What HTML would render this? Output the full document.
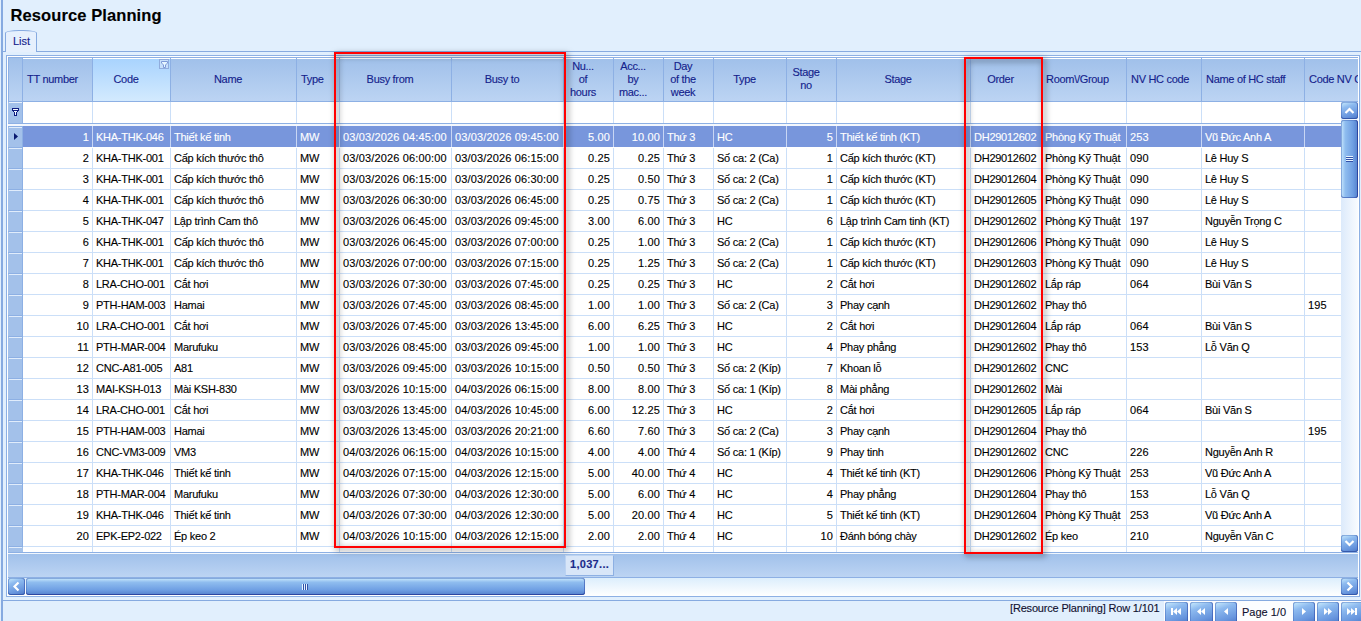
<!DOCTYPE html><html><head><meta charset="utf-8"><style>
*{margin:0;padding:0;box-sizing:border-box}
html,body{width:1361px;height:621px;overflow:hidden}
body{position:relative;background:#E1EFFD;font-family:"Liberation Sans",sans-serif;font-size:11px;color:#000;-webkit-text-stroke:0.12px currentColor}
div,span{position:absolute}
.t{white-space:nowrap;line-height:13px}
.hd{color:#14228C;text-align:center;line-height:13px;white-space:nowrap;letter-spacing:-0.3px}
.cl{letter-spacing:-0.25px}
.nm{letter-spacing:0.15px}

</style></head><body>
<div style="left:1px;top:0px;width:2px;height:621px;background:#86AAE0"></div>
<div class="t" style="left:10.5px;top:5px;font-size:16.5px;font-weight:bold;line-height:20px;color:#000;letter-spacing:0.1px">Resource Planning</div>
<div style="left:1px;top:51px;width:1360px;height:1px;background:#86AAE0"></div>
<div style="left:5px;top:30px;width:32px;height:22px;border:1px solid #86AAE0;border-bottom:none;border-radius:14px 14px 0 0/3px 3px 0 0;background:#E6F0FD"></div>
<div class="t" style="left:13px;top:35px;color:#14228C">List</div>
<div style="left:1px;top:600px;width:1360px;height:1px;background:#86AAE0"></div>
<div style="left:6px;top:55px;width:1354px;height:542px;border:1px solid #8DB0E4;background:#fff"></div>
<div style="left:8px;top:57px;width:1350px;height:45px;border-top:1px solid #8DB0E4;border-bottom:1px solid #8DB0E4;background:linear-gradient(#A0C0EA,#BCD4F3)"></div>
<div style="left:8px;top:58px;width:1350px;height:1px;background:#fff"></div>
<div style="left:8px;top:57px;width:15px;height:45px;border:1px solid #8DB0E4;border-right:1px solid #8DB0E4;background:linear-gradient(#A0C0EA,#BCD4F3)"></div>
<div style="left:92px;top:57px;width:1px;height:45px;background:#8DB0E4"></div>
<div class="hd" style="left:27px;top:73px;text-align:left">TT number</div>
<div style="left:93px;top:58px;width:77px;height:43px;background:linear-gradient(#A8D3FE,#D3EAFE)"></div>
<div style="left:93px;top:58px;width:77px;height:1px;background:#fff"></div>
<div style="left:170px;top:57px;width:1px;height:45px;background:#8DB0E4"></div>
<div class="hd" style="left:93px;top:73px;width:66px">Code</div>
<div style="left:296px;top:57px;width:1px;height:45px;background:#8DB0E4"></div>
<div class="hd" style="left:171px;top:73px;width:114px">Name</div>
<div style="left:339px;top:57px;width:1px;height:45px;background:#8DB0E4"></div>
<div class="hd" style="left:301px;top:73px;text-align:left">Type</div>
<div style="left:451px;top:57px;width:1px;height:45px;background:#8DB0E4"></div>
<div class="hd" style="left:340px;top:73px;width:100px">Busy from</div>
<div style="left:563px;top:57px;width:1px;height:45px;background:#8DB0E4"></div>
<div class="hd" style="left:452px;top:73px;width:100px">Busy to</div>
<div style="left:613px;top:57px;width:1px;height:45px;background:#8DB0E4"></div>
<div class="hd" style="left:564px;top:60px;width:38px">Nu...<br>of<br>hours</div>
<div style="left:663px;top:57px;width:1px;height:45px;background:#8DB0E4"></div>
<div class="hd" style="left:614px;top:60px;width:38px">Acc...<br>by<br>mac...</div>
<div style="left:713px;top:57px;width:1px;height:45px;background:#8DB0E4"></div>
<div class="hd" style="left:664px;top:60px;width:38px">Day<br>of the<br>week</div>
<div style="left:786px;top:57px;width:1px;height:45px;background:#8DB0E4"></div>
<div class="hd" style="left:714px;top:73px;width:61px">Type</div>
<div style="left:836px;top:57px;width:1px;height:45px;background:#8DB0E4"></div>
<div class="hd" style="left:787px;top:66px;width:38px">Stage<br>no</div>
<div style="left:970px;top:57px;width:1px;height:45px;background:#8DB0E4"></div>
<div class="hd" style="left:837px;top:73px;width:122px">Stage</div>
<div style="left:1041px;top:57px;width:1px;height:45px;background:#8DB0E4"></div>
<div class="hd" style="left:971px;top:73px;width:59px">Order</div>
<div style="left:1126px;top:57px;width:1px;height:45px;background:#8DB0E4"></div>
<div class="hd" style="left:1046px;top:73px;text-align:left">Room\/Group</div>
<div style="left:1201px;top:57px;width:1px;height:45px;background:#8DB0E4"></div>
<div class="hd" style="left:1131px;top:73px;text-align:left">NV HC code</div>
<div style="left:1304px;top:57px;width:1px;height:45px;background:#8DB0E4"></div>
<div class="hd" style="left:1206px;top:73px;text-align:left">Name of HC staff</div>
<div class="hd" style="left:1309px;top:73px;text-align:left">Code NV C</div>
<div style="left:159px;top:59px;width:10px;height:10px;border:1px solid #90ACDD;background:#C6DFFA"></div>
<svg style="position:absolute;left:161px;top:61px" width="7" height="7"><path d="M0.5 0.5h6v1.5l-2 2v2.5h-2v-2.5l-2-2z" fill="#E6F6FF" stroke="#7E9AD8" stroke-width="1"/></svg>
<div style="left:8px;top:102px;width:15px;height:22px;background:#A3C1EA"></div>
<div style="left:9px;top:102px;width:13px;height:1px;background:#E8F1FC"></div>
<div style="left:8px;top:123px;width:1333px;height:1px;background:#8DB0E4"></div>
<div style="left:8px;top:124px;width:1333px;height:2px;background:#F3F7FD"></div>
<div style="left:8px;top:126px;width:15px;height:1px;background:#8DB0E4"></div>
<div style="left:92px;top:102px;width:1px;height:21px;background:#CBDFF8"></div>
<div style="left:170px;top:102px;width:1px;height:21px;background:#CBDFF8"></div>
<div style="left:296px;top:102px;width:1px;height:21px;background:#CBDFF8"></div>
<div style="left:339px;top:102px;width:1px;height:21px;background:#CBDFF8"></div>
<div style="left:451px;top:102px;width:1px;height:21px;background:#CBDFF8"></div>
<div style="left:563px;top:102px;width:1px;height:21px;background:#CBDFF8"></div>
<div style="left:613px;top:102px;width:1px;height:21px;background:#CBDFF8"></div>
<div style="left:663px;top:102px;width:1px;height:21px;background:#CBDFF8"></div>
<div style="left:713px;top:102px;width:1px;height:21px;background:#CBDFF8"></div>
<div style="left:786px;top:102px;width:1px;height:21px;background:#CBDFF8"></div>
<div style="left:836px;top:102px;width:1px;height:21px;background:#CBDFF8"></div>
<div style="left:970px;top:102px;width:1px;height:21px;background:#CBDFF8"></div>
<div style="left:1041px;top:102px;width:1px;height:21px;background:#CBDFF8"></div>
<div style="left:1126px;top:102px;width:1px;height:21px;background:#CBDFF8"></div>
<div style="left:1201px;top:102px;width:1px;height:21px;background:#CBDFF8"></div>
<div style="left:1304px;top:102px;width:1px;height:21px;background:#CBDFF8"></div>
<div style="left:22px;top:102px;width:1px;height:22px;background:#8DB0E4"></div>
<svg style="position:absolute;left:12px;top:108px" width="7" height="8" shape-rendering="crispEdges"><rect x="0" y="0" width="1" height="1" fill="#0D1B80"/><rect x="1" y="0" width="1" height="1" fill="#0D1B80"/><rect x="2" y="0" width="1" height="1" fill="#0D1B80"/><rect x="3" y="0" width="1" height="1" fill="#0D1B80"/><rect x="4" y="0" width="1" height="1" fill="#0D1B80"/><rect x="5" y="0" width="1" height="1" fill="#0D1B80"/><rect x="6" y="0" width="1" height="1" fill="#0D1B80"/><rect x="0" y="1" width="1" height="1" fill="#0D1B80"/><rect x="1" y="1" width="1" height="1" fill="#F4F9FF"/><rect x="2" y="1" width="1" height="1" fill="#F4F9FF"/><rect x="3" y="1" width="1" height="1" fill="#F4F9FF"/><rect x="4" y="1" width="1" height="1" fill="#F4F9FF"/><rect x="5" y="1" width="1" height="1" fill="#F4F9FF"/><rect x="6" y="1" width="1" height="1" fill="#0D1B80"/><rect x="0" y="2" width="1" height="1" fill="#0D1B80"/><rect x="1" y="2" width="1" height="1" fill="#0D1B80"/><rect x="2" y="2" width="1" height="1" fill="#0D1B80"/><rect x="3" y="2" width="1" height="1" fill="#0D1B80"/><rect x="4" y="2" width="1" height="1" fill="#0D1B80"/><rect x="5" y="2" width="1" height="1" fill="#0D1B80"/><rect x="6" y="2" width="1" height="1" fill="#0D1B80"/><rect x="1" y="3" width="1" height="1" fill="#0D1B80"/><rect x="2" y="3" width="1" height="1" fill="#F4F9FF"/><rect x="3" y="3" width="1" height="1" fill="#F4F9FF"/><rect x="4" y="3" width="1" height="1" fill="#F4F9FF"/><rect x="5" y="3" width="1" height="1" fill="#0D1B80"/><rect x="2" y="4" width="1" height="1" fill="#0D1B80"/><rect x="3" y="4" width="1" height="1" fill="#F4F9FF"/><rect x="4" y="4" width="1" height="1" fill="#0D1B80"/><rect x="2" y="5" width="1" height="1" fill="#0D1B80"/><rect x="3" y="5" width="1" height="1" fill="#F4F9FF"/><rect x="4" y="5" width="1" height="1" fill="#0D1B80"/><rect x="2" y="6" width="1" height="1" fill="#0D1B80"/><rect x="3" y="6" width="1" height="1" fill="#F4F9FF"/><rect x="4" y="6" width="1" height="1" fill="#0D1B80"/><rect x="2" y="7" width="1" height="1" fill="#0D1B80"/><rect x="3" y="7" width="1" height="1" fill="#0D1B80"/><rect x="4" y="7" width="1" height="1" fill="#0D1B80"/></svg>
<div style="left:8px;top:127px;width:15px;height:20px;background:#A3C1EA"></div>
<div style="left:9px;top:127px;width:13px;height:1px;background:#E0ECFB"></div>
<div style="left:8px;top:147px;width:15px;height:1px;background:#8DB0E4"></div>
<div style="left:23px;top:126px;width:1318px;height:21px;background:#7896DC"></div>
<div style="left:92px;top:126px;width:1px;height:21px;background:#C8D6F4"></div>
<div class="t nm" style="right:1272px;top:131px;color:#fff">1</div>
<div style="left:170px;top:126px;width:1px;height:21px;background:#C8D6F4"></div>
<div class="t cl" style="left:96px;top:131px;color:#fff">KHA-THK-046</div>
<div style="left:296px;top:126px;width:1px;height:21px;background:#C8D6F4"></div>
<div class="t cl" style="left:174px;top:131px;color:#fff">Thiết kế tinh</div>
<div style="left:339px;top:126px;width:1px;height:21px;background:#C8D6F4"></div>
<div class="t cl" style="left:300px;top:131px;color:#fff">MW</div>
<div style="left:451px;top:126px;width:1px;height:21px;background:#C8D6F4"></div>
<div class="t nm" style="left:343px;top:131px;color:#fff">03/03/2026 04:45:00</div>
<div style="left:563px;top:126px;width:1px;height:21px;background:#C8D6F4"></div>
<div class="t nm" style="left:455px;top:131px;color:#fff">03/03/2026 09:45:00</div>
<div style="left:613px;top:126px;width:1px;height:21px;background:#C8D6F4"></div>
<div class="t nm" style="right:751px;top:131px;color:#fff">5.00</div>
<div style="left:663px;top:126px;width:1px;height:21px;background:#C8D6F4"></div>
<div class="t nm" style="right:701px;top:131px;color:#fff">10.00</div>
<div style="left:713px;top:126px;width:1px;height:21px;background:#C8D6F4"></div>
<div class="t cl" style="left:667px;top:131px;color:#fff">Thứ 3</div>
<div style="left:786px;top:126px;width:1px;height:21px;background:#C8D6F4"></div>
<div class="t cl" style="left:717px;top:131px;color:#fff">HC</div>
<div style="left:836px;top:126px;width:1px;height:21px;background:#C8D6F4"></div>
<div class="t nm" style="right:528px;top:131px;color:#fff">5</div>
<div style="left:970px;top:126px;width:1px;height:21px;background:#C8D6F4"></div>
<div class="t cl" style="left:840px;top:131px;color:#fff">Thiết kế tinh (KT)</div>
<div style="left:1041px;top:126px;width:1px;height:21px;background:#C8D6F4"></div>
<div class="t cl" style="left:974px;top:131px;color:#fff">DH29012602</div>
<div style="left:1126px;top:126px;width:1px;height:21px;background:#C8D6F4"></div>
<div class="t cl" style="left:1045px;top:131px;color:#fff">Phòng Kỹ Thuật</div>
<div style="left:1201px;top:126px;width:1px;height:21px;background:#C8D6F4"></div>
<div class="t nm" style="left:1130px;top:131px;color:#fff">253</div>
<div style="left:1304px;top:126px;width:1px;height:21px;background:#C8D6F4"></div>
<div class="t cl" style="left:1205px;top:131px;color:#fff">Vũ Đức Anh A</div>
<div style="left:8px;top:148px;width:15px;height:20px;background:#A3C1EA"></div>
<div style="left:9px;top:148px;width:13px;height:1px;background:#E0ECFB"></div>
<div style="left:8px;top:168px;width:15px;height:1px;background:#8DB0E4"></div>
<div style="left:23px;top:168px;width:1318px;height:1px;background:#CBDFF8"></div>
<div style="left:92px;top:148px;width:1px;height:21px;background:#CBDFF8"></div>
<div class="t nm" style="right:1272px;top:152px;color:#000">2</div>
<div style="left:170px;top:148px;width:1px;height:21px;background:#CBDFF8"></div>
<div class="t cl" style="left:96px;top:152px;color:#000">KHA-THK-001</div>
<div style="left:296px;top:148px;width:1px;height:21px;background:#CBDFF8"></div>
<div class="t cl" style="left:174px;top:152px;color:#000">Cấp kích thước thô</div>
<div style="left:339px;top:148px;width:1px;height:21px;background:#CBDFF8"></div>
<div class="t cl" style="left:300px;top:152px;color:#000">MW</div>
<div style="left:451px;top:148px;width:1px;height:21px;background:#CBDFF8"></div>
<div class="t nm" style="left:343px;top:152px;color:#000">03/03/2026 06:00:00</div>
<div style="left:563px;top:148px;width:1px;height:21px;background:#CBDFF8"></div>
<div class="t nm" style="left:455px;top:152px;color:#000">03/03/2026 06:15:00</div>
<div style="left:613px;top:148px;width:1px;height:21px;background:#CBDFF8"></div>
<div class="t nm" style="right:751px;top:152px;color:#000">0.25</div>
<div style="left:663px;top:148px;width:1px;height:21px;background:#CBDFF8"></div>
<div class="t nm" style="right:701px;top:152px;color:#000">0.25</div>
<div style="left:713px;top:148px;width:1px;height:21px;background:#CBDFF8"></div>
<div class="t cl" style="left:667px;top:152px;color:#000">Thứ 3</div>
<div style="left:786px;top:148px;width:1px;height:21px;background:#CBDFF8"></div>
<div class="t cl" style="left:717px;top:152px;color:#000">Số ca: 2 (Ca)</div>
<div style="left:836px;top:148px;width:1px;height:21px;background:#CBDFF8"></div>
<div class="t nm" style="right:528px;top:152px;color:#000">1</div>
<div style="left:970px;top:148px;width:1px;height:21px;background:#CBDFF8"></div>
<div class="t cl" style="left:840px;top:152px;color:#000">Cấp kích thước (KT)</div>
<div style="left:1041px;top:148px;width:1px;height:21px;background:#CBDFF8"></div>
<div class="t cl" style="left:974px;top:152px;color:#000">DH29012602</div>
<div style="left:1126px;top:148px;width:1px;height:21px;background:#CBDFF8"></div>
<div class="t cl" style="left:1045px;top:152px;color:#000">Phòng Kỹ Thuật</div>
<div style="left:1201px;top:148px;width:1px;height:21px;background:#CBDFF8"></div>
<div class="t nm" style="left:1130px;top:152px;color:#000">090</div>
<div style="left:1304px;top:148px;width:1px;height:21px;background:#CBDFF8"></div>
<div class="t cl" style="left:1205px;top:152px;color:#000">Lê Huy S</div>
<div style="left:8px;top:169px;width:15px;height:20px;background:#A3C1EA"></div>
<div style="left:9px;top:169px;width:13px;height:1px;background:#E0ECFB"></div>
<div style="left:8px;top:189px;width:15px;height:1px;background:#8DB0E4"></div>
<div style="left:23px;top:189px;width:1318px;height:1px;background:#CBDFF8"></div>
<div style="left:92px;top:169px;width:1px;height:21px;background:#CBDFF8"></div>
<div class="t nm" style="right:1272px;top:173px;color:#000">3</div>
<div style="left:170px;top:169px;width:1px;height:21px;background:#CBDFF8"></div>
<div class="t cl" style="left:96px;top:173px;color:#000">KHA-THK-001</div>
<div style="left:296px;top:169px;width:1px;height:21px;background:#CBDFF8"></div>
<div class="t cl" style="left:174px;top:173px;color:#000">Cấp kích thước thô</div>
<div style="left:339px;top:169px;width:1px;height:21px;background:#CBDFF8"></div>
<div class="t cl" style="left:300px;top:173px;color:#000">MW</div>
<div style="left:451px;top:169px;width:1px;height:21px;background:#CBDFF8"></div>
<div class="t nm" style="left:343px;top:173px;color:#000">03/03/2026 06:15:00</div>
<div style="left:563px;top:169px;width:1px;height:21px;background:#CBDFF8"></div>
<div class="t nm" style="left:455px;top:173px;color:#000">03/03/2026 06:30:00</div>
<div style="left:613px;top:169px;width:1px;height:21px;background:#CBDFF8"></div>
<div class="t nm" style="right:751px;top:173px;color:#000">0.25</div>
<div style="left:663px;top:169px;width:1px;height:21px;background:#CBDFF8"></div>
<div class="t nm" style="right:701px;top:173px;color:#000">0.50</div>
<div style="left:713px;top:169px;width:1px;height:21px;background:#CBDFF8"></div>
<div class="t cl" style="left:667px;top:173px;color:#000">Thứ 3</div>
<div style="left:786px;top:169px;width:1px;height:21px;background:#CBDFF8"></div>
<div class="t cl" style="left:717px;top:173px;color:#000">Số ca: 2 (Ca)</div>
<div style="left:836px;top:169px;width:1px;height:21px;background:#CBDFF8"></div>
<div class="t nm" style="right:528px;top:173px;color:#000">1</div>
<div style="left:970px;top:169px;width:1px;height:21px;background:#CBDFF8"></div>
<div class="t cl" style="left:840px;top:173px;color:#000">Cấp kích thước (KT)</div>
<div style="left:1041px;top:169px;width:1px;height:21px;background:#CBDFF8"></div>
<div class="t cl" style="left:974px;top:173px;color:#000">DH29012604</div>
<div style="left:1126px;top:169px;width:1px;height:21px;background:#CBDFF8"></div>
<div class="t cl" style="left:1045px;top:173px;color:#000">Phòng Kỹ Thuật</div>
<div style="left:1201px;top:169px;width:1px;height:21px;background:#CBDFF8"></div>
<div class="t nm" style="left:1130px;top:173px;color:#000">090</div>
<div style="left:1304px;top:169px;width:1px;height:21px;background:#CBDFF8"></div>
<div class="t cl" style="left:1205px;top:173px;color:#000">Lê Huy S</div>
<div style="left:8px;top:190px;width:15px;height:20px;background:#A3C1EA"></div>
<div style="left:9px;top:190px;width:13px;height:1px;background:#E0ECFB"></div>
<div style="left:8px;top:210px;width:15px;height:1px;background:#8DB0E4"></div>
<div style="left:23px;top:210px;width:1318px;height:1px;background:#CBDFF8"></div>
<div style="left:92px;top:190px;width:1px;height:21px;background:#CBDFF8"></div>
<div class="t nm" style="right:1272px;top:194px;color:#000">4</div>
<div style="left:170px;top:190px;width:1px;height:21px;background:#CBDFF8"></div>
<div class="t cl" style="left:96px;top:194px;color:#000">KHA-THK-001</div>
<div style="left:296px;top:190px;width:1px;height:21px;background:#CBDFF8"></div>
<div class="t cl" style="left:174px;top:194px;color:#000">Cấp kích thước thô</div>
<div style="left:339px;top:190px;width:1px;height:21px;background:#CBDFF8"></div>
<div class="t cl" style="left:300px;top:194px;color:#000">MW</div>
<div style="left:451px;top:190px;width:1px;height:21px;background:#CBDFF8"></div>
<div class="t nm" style="left:343px;top:194px;color:#000">03/03/2026 06:30:00</div>
<div style="left:563px;top:190px;width:1px;height:21px;background:#CBDFF8"></div>
<div class="t nm" style="left:455px;top:194px;color:#000">03/03/2026 06:45:00</div>
<div style="left:613px;top:190px;width:1px;height:21px;background:#CBDFF8"></div>
<div class="t nm" style="right:751px;top:194px;color:#000">0.25</div>
<div style="left:663px;top:190px;width:1px;height:21px;background:#CBDFF8"></div>
<div class="t nm" style="right:701px;top:194px;color:#000">0.75</div>
<div style="left:713px;top:190px;width:1px;height:21px;background:#CBDFF8"></div>
<div class="t cl" style="left:667px;top:194px;color:#000">Thứ 3</div>
<div style="left:786px;top:190px;width:1px;height:21px;background:#CBDFF8"></div>
<div class="t cl" style="left:717px;top:194px;color:#000">Số ca: 2 (Ca)</div>
<div style="left:836px;top:190px;width:1px;height:21px;background:#CBDFF8"></div>
<div class="t nm" style="right:528px;top:194px;color:#000">1</div>
<div style="left:970px;top:190px;width:1px;height:21px;background:#CBDFF8"></div>
<div class="t cl" style="left:840px;top:194px;color:#000">Cấp kích thước (KT)</div>
<div style="left:1041px;top:190px;width:1px;height:21px;background:#CBDFF8"></div>
<div class="t cl" style="left:974px;top:194px;color:#000">DH29012605</div>
<div style="left:1126px;top:190px;width:1px;height:21px;background:#CBDFF8"></div>
<div class="t cl" style="left:1045px;top:194px;color:#000">Phòng Kỹ Thuật</div>
<div style="left:1201px;top:190px;width:1px;height:21px;background:#CBDFF8"></div>
<div class="t nm" style="left:1130px;top:194px;color:#000">090</div>
<div style="left:1304px;top:190px;width:1px;height:21px;background:#CBDFF8"></div>
<div class="t cl" style="left:1205px;top:194px;color:#000">Lê Huy S</div>
<div style="left:8px;top:211px;width:15px;height:20px;background:#A3C1EA"></div>
<div style="left:9px;top:211px;width:13px;height:1px;background:#E0ECFB"></div>
<div style="left:8px;top:231px;width:15px;height:1px;background:#8DB0E4"></div>
<div style="left:23px;top:231px;width:1318px;height:1px;background:#CBDFF8"></div>
<div style="left:92px;top:211px;width:1px;height:21px;background:#CBDFF8"></div>
<div class="t nm" style="right:1272px;top:215px;color:#000">5</div>
<div style="left:170px;top:211px;width:1px;height:21px;background:#CBDFF8"></div>
<div class="t cl" style="left:96px;top:215px;color:#000">KHA-THK-047</div>
<div style="left:296px;top:211px;width:1px;height:21px;background:#CBDFF8"></div>
<div class="t cl" style="left:174px;top:215px;color:#000">Lập trình Cam thô</div>
<div style="left:339px;top:211px;width:1px;height:21px;background:#CBDFF8"></div>
<div class="t cl" style="left:300px;top:215px;color:#000">MW</div>
<div style="left:451px;top:211px;width:1px;height:21px;background:#CBDFF8"></div>
<div class="t nm" style="left:343px;top:215px;color:#000">03/03/2026 06:45:00</div>
<div style="left:563px;top:211px;width:1px;height:21px;background:#CBDFF8"></div>
<div class="t nm" style="left:455px;top:215px;color:#000">03/03/2026 09:45:00</div>
<div style="left:613px;top:211px;width:1px;height:21px;background:#CBDFF8"></div>
<div class="t nm" style="right:751px;top:215px;color:#000">3.00</div>
<div style="left:663px;top:211px;width:1px;height:21px;background:#CBDFF8"></div>
<div class="t nm" style="right:701px;top:215px;color:#000">6.00</div>
<div style="left:713px;top:211px;width:1px;height:21px;background:#CBDFF8"></div>
<div class="t cl" style="left:667px;top:215px;color:#000">Thứ 3</div>
<div style="left:786px;top:211px;width:1px;height:21px;background:#CBDFF8"></div>
<div class="t cl" style="left:717px;top:215px;color:#000">HC</div>
<div style="left:836px;top:211px;width:1px;height:21px;background:#CBDFF8"></div>
<div class="t nm" style="right:528px;top:215px;color:#000">6</div>
<div style="left:970px;top:211px;width:1px;height:21px;background:#CBDFF8"></div>
<div class="t cl" style="left:840px;top:215px;color:#000">Lập trình Cam tinh (KT)</div>
<div style="left:1041px;top:211px;width:1px;height:21px;background:#CBDFF8"></div>
<div class="t cl" style="left:974px;top:215px;color:#000">DH29012602</div>
<div style="left:1126px;top:211px;width:1px;height:21px;background:#CBDFF8"></div>
<div class="t cl" style="left:1045px;top:215px;color:#000">Phòng Kỹ Thuật</div>
<div style="left:1201px;top:211px;width:1px;height:21px;background:#CBDFF8"></div>
<div class="t nm" style="left:1130px;top:215px;color:#000">197</div>
<div style="left:1304px;top:211px;width:1px;height:21px;background:#CBDFF8"></div>
<div class="t cl" style="left:1205px;top:215px;color:#000">Nguyễn Trọng C</div>
<div style="left:8px;top:232px;width:15px;height:20px;background:#A3C1EA"></div>
<div style="left:9px;top:232px;width:13px;height:1px;background:#E0ECFB"></div>
<div style="left:8px;top:252px;width:15px;height:1px;background:#8DB0E4"></div>
<div style="left:23px;top:252px;width:1318px;height:1px;background:#CBDFF8"></div>
<div style="left:92px;top:232px;width:1px;height:21px;background:#CBDFF8"></div>
<div class="t nm" style="right:1272px;top:236px;color:#000">6</div>
<div style="left:170px;top:232px;width:1px;height:21px;background:#CBDFF8"></div>
<div class="t cl" style="left:96px;top:236px;color:#000">KHA-THK-001</div>
<div style="left:296px;top:232px;width:1px;height:21px;background:#CBDFF8"></div>
<div class="t cl" style="left:174px;top:236px;color:#000">Cấp kích thước thô</div>
<div style="left:339px;top:232px;width:1px;height:21px;background:#CBDFF8"></div>
<div class="t cl" style="left:300px;top:236px;color:#000">MW</div>
<div style="left:451px;top:232px;width:1px;height:21px;background:#CBDFF8"></div>
<div class="t nm" style="left:343px;top:236px;color:#000">03/03/2026 06:45:00</div>
<div style="left:563px;top:232px;width:1px;height:21px;background:#CBDFF8"></div>
<div class="t nm" style="left:455px;top:236px;color:#000">03/03/2026 07:00:00</div>
<div style="left:613px;top:232px;width:1px;height:21px;background:#CBDFF8"></div>
<div class="t nm" style="right:751px;top:236px;color:#000">0.25</div>
<div style="left:663px;top:232px;width:1px;height:21px;background:#CBDFF8"></div>
<div class="t nm" style="right:701px;top:236px;color:#000">1.00</div>
<div style="left:713px;top:232px;width:1px;height:21px;background:#CBDFF8"></div>
<div class="t cl" style="left:667px;top:236px;color:#000">Thứ 3</div>
<div style="left:786px;top:232px;width:1px;height:21px;background:#CBDFF8"></div>
<div class="t cl" style="left:717px;top:236px;color:#000">Số ca: 2 (Ca)</div>
<div style="left:836px;top:232px;width:1px;height:21px;background:#CBDFF8"></div>
<div class="t nm" style="right:528px;top:236px;color:#000">1</div>
<div style="left:970px;top:232px;width:1px;height:21px;background:#CBDFF8"></div>
<div class="t cl" style="left:840px;top:236px;color:#000">Cấp kích thước (KT)</div>
<div style="left:1041px;top:232px;width:1px;height:21px;background:#CBDFF8"></div>
<div class="t cl" style="left:974px;top:236px;color:#000">DH29012606</div>
<div style="left:1126px;top:232px;width:1px;height:21px;background:#CBDFF8"></div>
<div class="t cl" style="left:1045px;top:236px;color:#000">Phòng Kỹ Thuật</div>
<div style="left:1201px;top:232px;width:1px;height:21px;background:#CBDFF8"></div>
<div class="t nm" style="left:1130px;top:236px;color:#000">090</div>
<div style="left:1304px;top:232px;width:1px;height:21px;background:#CBDFF8"></div>
<div class="t cl" style="left:1205px;top:236px;color:#000">Lê Huy S</div>
<div style="left:8px;top:253px;width:15px;height:20px;background:#A3C1EA"></div>
<div style="left:9px;top:253px;width:13px;height:1px;background:#E0ECFB"></div>
<div style="left:8px;top:273px;width:15px;height:1px;background:#8DB0E4"></div>
<div style="left:23px;top:273px;width:1318px;height:1px;background:#CBDFF8"></div>
<div style="left:92px;top:253px;width:1px;height:21px;background:#CBDFF8"></div>
<div class="t nm" style="right:1272px;top:257px;color:#000">7</div>
<div style="left:170px;top:253px;width:1px;height:21px;background:#CBDFF8"></div>
<div class="t cl" style="left:96px;top:257px;color:#000">KHA-THK-001</div>
<div style="left:296px;top:253px;width:1px;height:21px;background:#CBDFF8"></div>
<div class="t cl" style="left:174px;top:257px;color:#000">Cấp kích thước thô</div>
<div style="left:339px;top:253px;width:1px;height:21px;background:#CBDFF8"></div>
<div class="t cl" style="left:300px;top:257px;color:#000">MW</div>
<div style="left:451px;top:253px;width:1px;height:21px;background:#CBDFF8"></div>
<div class="t nm" style="left:343px;top:257px;color:#000">03/03/2026 07:00:00</div>
<div style="left:563px;top:253px;width:1px;height:21px;background:#CBDFF8"></div>
<div class="t nm" style="left:455px;top:257px;color:#000">03/03/2026 07:15:00</div>
<div style="left:613px;top:253px;width:1px;height:21px;background:#CBDFF8"></div>
<div class="t nm" style="right:751px;top:257px;color:#000">0.25</div>
<div style="left:663px;top:253px;width:1px;height:21px;background:#CBDFF8"></div>
<div class="t nm" style="right:701px;top:257px;color:#000">1.25</div>
<div style="left:713px;top:253px;width:1px;height:21px;background:#CBDFF8"></div>
<div class="t cl" style="left:667px;top:257px;color:#000">Thứ 3</div>
<div style="left:786px;top:253px;width:1px;height:21px;background:#CBDFF8"></div>
<div class="t cl" style="left:717px;top:257px;color:#000">Số ca: 2 (Ca)</div>
<div style="left:836px;top:253px;width:1px;height:21px;background:#CBDFF8"></div>
<div class="t nm" style="right:528px;top:257px;color:#000">1</div>
<div style="left:970px;top:253px;width:1px;height:21px;background:#CBDFF8"></div>
<div class="t cl" style="left:840px;top:257px;color:#000">Cấp kích thước (KT)</div>
<div style="left:1041px;top:253px;width:1px;height:21px;background:#CBDFF8"></div>
<div class="t cl" style="left:974px;top:257px;color:#000">DH29012603</div>
<div style="left:1126px;top:253px;width:1px;height:21px;background:#CBDFF8"></div>
<div class="t cl" style="left:1045px;top:257px;color:#000">Phòng Kỹ Thuật</div>
<div style="left:1201px;top:253px;width:1px;height:21px;background:#CBDFF8"></div>
<div class="t nm" style="left:1130px;top:257px;color:#000">090</div>
<div style="left:1304px;top:253px;width:1px;height:21px;background:#CBDFF8"></div>
<div class="t cl" style="left:1205px;top:257px;color:#000">Lê Huy S</div>
<div style="left:8px;top:274px;width:15px;height:20px;background:#A3C1EA"></div>
<div style="left:9px;top:274px;width:13px;height:1px;background:#E0ECFB"></div>
<div style="left:8px;top:294px;width:15px;height:1px;background:#8DB0E4"></div>
<div style="left:23px;top:294px;width:1318px;height:1px;background:#CBDFF8"></div>
<div style="left:92px;top:274px;width:1px;height:21px;background:#CBDFF8"></div>
<div class="t nm" style="right:1272px;top:278px;color:#000">8</div>
<div style="left:170px;top:274px;width:1px;height:21px;background:#CBDFF8"></div>
<div class="t cl" style="left:96px;top:278px;color:#000">LRA-CHO-001</div>
<div style="left:296px;top:274px;width:1px;height:21px;background:#CBDFF8"></div>
<div class="t cl" style="left:174px;top:278px;color:#000">Cắt hơi</div>
<div style="left:339px;top:274px;width:1px;height:21px;background:#CBDFF8"></div>
<div class="t cl" style="left:300px;top:278px;color:#000">MW</div>
<div style="left:451px;top:274px;width:1px;height:21px;background:#CBDFF8"></div>
<div class="t nm" style="left:343px;top:278px;color:#000">03/03/2026 07:30:00</div>
<div style="left:563px;top:274px;width:1px;height:21px;background:#CBDFF8"></div>
<div class="t nm" style="left:455px;top:278px;color:#000">03/03/2026 07:45:00</div>
<div style="left:613px;top:274px;width:1px;height:21px;background:#CBDFF8"></div>
<div class="t nm" style="right:751px;top:278px;color:#000">0.25</div>
<div style="left:663px;top:274px;width:1px;height:21px;background:#CBDFF8"></div>
<div class="t nm" style="right:701px;top:278px;color:#000">0.25</div>
<div style="left:713px;top:274px;width:1px;height:21px;background:#CBDFF8"></div>
<div class="t cl" style="left:667px;top:278px;color:#000">Thứ 3</div>
<div style="left:786px;top:274px;width:1px;height:21px;background:#CBDFF8"></div>
<div class="t cl" style="left:717px;top:278px;color:#000">HC</div>
<div style="left:836px;top:274px;width:1px;height:21px;background:#CBDFF8"></div>
<div class="t nm" style="right:528px;top:278px;color:#000">2</div>
<div style="left:970px;top:274px;width:1px;height:21px;background:#CBDFF8"></div>
<div class="t cl" style="left:840px;top:278px;color:#000">Cắt hơi</div>
<div style="left:1041px;top:274px;width:1px;height:21px;background:#CBDFF8"></div>
<div class="t cl" style="left:974px;top:278px;color:#000">DH29012602</div>
<div style="left:1126px;top:274px;width:1px;height:21px;background:#CBDFF8"></div>
<div class="t cl" style="left:1045px;top:278px;color:#000">Lắp ráp</div>
<div style="left:1201px;top:274px;width:1px;height:21px;background:#CBDFF8"></div>
<div class="t nm" style="left:1130px;top:278px;color:#000">064</div>
<div style="left:1304px;top:274px;width:1px;height:21px;background:#CBDFF8"></div>
<div class="t cl" style="left:1205px;top:278px;color:#000">Bùi Văn S</div>
<div style="left:8px;top:295px;width:15px;height:20px;background:#A3C1EA"></div>
<div style="left:9px;top:295px;width:13px;height:1px;background:#E0ECFB"></div>
<div style="left:8px;top:315px;width:15px;height:1px;background:#8DB0E4"></div>
<div style="left:23px;top:315px;width:1318px;height:1px;background:#CBDFF8"></div>
<div style="left:92px;top:295px;width:1px;height:21px;background:#CBDFF8"></div>
<div class="t nm" style="right:1272px;top:299px;color:#000">9</div>
<div style="left:170px;top:295px;width:1px;height:21px;background:#CBDFF8"></div>
<div class="t cl" style="left:96px;top:299px;color:#000">PTH-HAM-003</div>
<div style="left:296px;top:295px;width:1px;height:21px;background:#CBDFF8"></div>
<div class="t cl" style="left:174px;top:299px;color:#000">Hamai</div>
<div style="left:339px;top:295px;width:1px;height:21px;background:#CBDFF8"></div>
<div class="t cl" style="left:300px;top:299px;color:#000">MW</div>
<div style="left:451px;top:295px;width:1px;height:21px;background:#CBDFF8"></div>
<div class="t nm" style="left:343px;top:299px;color:#000">03/03/2026 07:45:00</div>
<div style="left:563px;top:295px;width:1px;height:21px;background:#CBDFF8"></div>
<div class="t nm" style="left:455px;top:299px;color:#000">03/03/2026 08:45:00</div>
<div style="left:613px;top:295px;width:1px;height:21px;background:#CBDFF8"></div>
<div class="t nm" style="right:751px;top:299px;color:#000">1.00</div>
<div style="left:663px;top:295px;width:1px;height:21px;background:#CBDFF8"></div>
<div class="t nm" style="right:701px;top:299px;color:#000">1.00</div>
<div style="left:713px;top:295px;width:1px;height:21px;background:#CBDFF8"></div>
<div class="t cl" style="left:667px;top:299px;color:#000">Thứ 3</div>
<div style="left:786px;top:295px;width:1px;height:21px;background:#CBDFF8"></div>
<div class="t cl" style="left:717px;top:299px;color:#000">Số ca: 2 (Ca)</div>
<div style="left:836px;top:295px;width:1px;height:21px;background:#CBDFF8"></div>
<div class="t nm" style="right:528px;top:299px;color:#000">3</div>
<div style="left:970px;top:295px;width:1px;height:21px;background:#CBDFF8"></div>
<div class="t cl" style="left:840px;top:299px;color:#000">Phay cạnh</div>
<div style="left:1041px;top:295px;width:1px;height:21px;background:#CBDFF8"></div>
<div class="t cl" style="left:974px;top:299px;color:#000">DH29012602</div>
<div style="left:1126px;top:295px;width:1px;height:21px;background:#CBDFF8"></div>
<div class="t cl" style="left:1045px;top:299px;color:#000">Phay thô</div>
<div style="left:1201px;top:295px;width:1px;height:21px;background:#CBDFF8"></div>
<div style="left:1304px;top:295px;width:1px;height:21px;background:#CBDFF8"></div>
<div class="t nm" style="left:1308px;top:299px;color:#000">195</div>
<div style="left:8px;top:316px;width:15px;height:20px;background:#A3C1EA"></div>
<div style="left:9px;top:316px;width:13px;height:1px;background:#E0ECFB"></div>
<div style="left:8px;top:336px;width:15px;height:1px;background:#8DB0E4"></div>
<div style="left:23px;top:336px;width:1318px;height:1px;background:#CBDFF8"></div>
<div style="left:92px;top:316px;width:1px;height:21px;background:#CBDFF8"></div>
<div class="t nm" style="right:1272px;top:320px;color:#000">10</div>
<div style="left:170px;top:316px;width:1px;height:21px;background:#CBDFF8"></div>
<div class="t cl" style="left:96px;top:320px;color:#000">LRA-CHO-001</div>
<div style="left:296px;top:316px;width:1px;height:21px;background:#CBDFF8"></div>
<div class="t cl" style="left:174px;top:320px;color:#000">Cắt hơi</div>
<div style="left:339px;top:316px;width:1px;height:21px;background:#CBDFF8"></div>
<div class="t cl" style="left:300px;top:320px;color:#000">MW</div>
<div style="left:451px;top:316px;width:1px;height:21px;background:#CBDFF8"></div>
<div class="t nm" style="left:343px;top:320px;color:#000">03/03/2026 07:45:00</div>
<div style="left:563px;top:316px;width:1px;height:21px;background:#CBDFF8"></div>
<div class="t nm" style="left:455px;top:320px;color:#000">03/03/2026 13:45:00</div>
<div style="left:613px;top:316px;width:1px;height:21px;background:#CBDFF8"></div>
<div class="t nm" style="right:751px;top:320px;color:#000">6.00</div>
<div style="left:663px;top:316px;width:1px;height:21px;background:#CBDFF8"></div>
<div class="t nm" style="right:701px;top:320px;color:#000">6.25</div>
<div style="left:713px;top:316px;width:1px;height:21px;background:#CBDFF8"></div>
<div class="t cl" style="left:667px;top:320px;color:#000">Thứ 3</div>
<div style="left:786px;top:316px;width:1px;height:21px;background:#CBDFF8"></div>
<div class="t cl" style="left:717px;top:320px;color:#000">HC</div>
<div style="left:836px;top:316px;width:1px;height:21px;background:#CBDFF8"></div>
<div class="t nm" style="right:528px;top:320px;color:#000">2</div>
<div style="left:970px;top:316px;width:1px;height:21px;background:#CBDFF8"></div>
<div class="t cl" style="left:840px;top:320px;color:#000">Cắt hơi</div>
<div style="left:1041px;top:316px;width:1px;height:21px;background:#CBDFF8"></div>
<div class="t cl" style="left:974px;top:320px;color:#000">DH29012604</div>
<div style="left:1126px;top:316px;width:1px;height:21px;background:#CBDFF8"></div>
<div class="t cl" style="left:1045px;top:320px;color:#000">Lắp ráp</div>
<div style="left:1201px;top:316px;width:1px;height:21px;background:#CBDFF8"></div>
<div class="t nm" style="left:1130px;top:320px;color:#000">064</div>
<div style="left:1304px;top:316px;width:1px;height:21px;background:#CBDFF8"></div>
<div class="t cl" style="left:1205px;top:320px;color:#000">Bùi Văn S</div>
<div style="left:8px;top:337px;width:15px;height:20px;background:#A3C1EA"></div>
<div style="left:9px;top:337px;width:13px;height:1px;background:#E0ECFB"></div>
<div style="left:8px;top:357px;width:15px;height:1px;background:#8DB0E4"></div>
<div style="left:23px;top:357px;width:1318px;height:1px;background:#CBDFF8"></div>
<div style="left:92px;top:337px;width:1px;height:21px;background:#CBDFF8"></div>
<div class="t nm" style="right:1272px;top:341px;color:#000">11</div>
<div style="left:170px;top:337px;width:1px;height:21px;background:#CBDFF8"></div>
<div class="t cl" style="left:96px;top:341px;color:#000">PTH-MAR-004</div>
<div style="left:296px;top:337px;width:1px;height:21px;background:#CBDFF8"></div>
<div class="t cl" style="left:174px;top:341px;color:#000">Marufuku</div>
<div style="left:339px;top:337px;width:1px;height:21px;background:#CBDFF8"></div>
<div class="t cl" style="left:300px;top:341px;color:#000">MW</div>
<div style="left:451px;top:337px;width:1px;height:21px;background:#CBDFF8"></div>
<div class="t nm" style="left:343px;top:341px;color:#000">03/03/2026 08:45:00</div>
<div style="left:563px;top:337px;width:1px;height:21px;background:#CBDFF8"></div>
<div class="t nm" style="left:455px;top:341px;color:#000">03/03/2026 09:45:00</div>
<div style="left:613px;top:337px;width:1px;height:21px;background:#CBDFF8"></div>
<div class="t nm" style="right:751px;top:341px;color:#000">1.00</div>
<div style="left:663px;top:337px;width:1px;height:21px;background:#CBDFF8"></div>
<div class="t nm" style="right:701px;top:341px;color:#000">1.00</div>
<div style="left:713px;top:337px;width:1px;height:21px;background:#CBDFF8"></div>
<div class="t cl" style="left:667px;top:341px;color:#000">Thứ 3</div>
<div style="left:786px;top:337px;width:1px;height:21px;background:#CBDFF8"></div>
<div class="t cl" style="left:717px;top:341px;color:#000">HC</div>
<div style="left:836px;top:337px;width:1px;height:21px;background:#CBDFF8"></div>
<div class="t nm" style="right:528px;top:341px;color:#000">4</div>
<div style="left:970px;top:337px;width:1px;height:21px;background:#CBDFF8"></div>
<div class="t cl" style="left:840px;top:341px;color:#000">Phay phẳng</div>
<div style="left:1041px;top:337px;width:1px;height:21px;background:#CBDFF8"></div>
<div class="t cl" style="left:974px;top:341px;color:#000">DH29012602</div>
<div style="left:1126px;top:337px;width:1px;height:21px;background:#CBDFF8"></div>
<div class="t cl" style="left:1045px;top:341px;color:#000">Phay thô</div>
<div style="left:1201px;top:337px;width:1px;height:21px;background:#CBDFF8"></div>
<div class="t nm" style="left:1130px;top:341px;color:#000">153</div>
<div style="left:1304px;top:337px;width:1px;height:21px;background:#CBDFF8"></div>
<div class="t cl" style="left:1205px;top:341px;color:#000">Lỗ Văn Q</div>
<div style="left:8px;top:358px;width:15px;height:20px;background:#A3C1EA"></div>
<div style="left:9px;top:358px;width:13px;height:1px;background:#E0ECFB"></div>
<div style="left:8px;top:378px;width:15px;height:1px;background:#8DB0E4"></div>
<div style="left:23px;top:378px;width:1318px;height:1px;background:#CBDFF8"></div>
<div style="left:92px;top:358px;width:1px;height:21px;background:#CBDFF8"></div>
<div class="t nm" style="right:1272px;top:362px;color:#000">12</div>
<div style="left:170px;top:358px;width:1px;height:21px;background:#CBDFF8"></div>
<div class="t cl" style="left:96px;top:362px;color:#000">CNC-A81-005</div>
<div style="left:296px;top:358px;width:1px;height:21px;background:#CBDFF8"></div>
<div class="t cl" style="left:174px;top:362px;color:#000">A81</div>
<div style="left:339px;top:358px;width:1px;height:21px;background:#CBDFF8"></div>
<div class="t cl" style="left:300px;top:362px;color:#000">MW</div>
<div style="left:451px;top:358px;width:1px;height:21px;background:#CBDFF8"></div>
<div class="t nm" style="left:343px;top:362px;color:#000">03/03/2026 09:45:00</div>
<div style="left:563px;top:358px;width:1px;height:21px;background:#CBDFF8"></div>
<div class="t nm" style="left:455px;top:362px;color:#000">03/03/2026 10:15:00</div>
<div style="left:613px;top:358px;width:1px;height:21px;background:#CBDFF8"></div>
<div class="t nm" style="right:751px;top:362px;color:#000">0.50</div>
<div style="left:663px;top:358px;width:1px;height:21px;background:#CBDFF8"></div>
<div class="t nm" style="right:701px;top:362px;color:#000">0.50</div>
<div style="left:713px;top:358px;width:1px;height:21px;background:#CBDFF8"></div>
<div class="t cl" style="left:667px;top:362px;color:#000">Thứ 3</div>
<div style="left:786px;top:358px;width:1px;height:21px;background:#CBDFF8"></div>
<div class="t cl" style="left:717px;top:362px;color:#000">Số ca: 2 (Kíp)</div>
<div style="left:836px;top:358px;width:1px;height:21px;background:#CBDFF8"></div>
<div class="t nm" style="right:528px;top:362px;color:#000">7</div>
<div style="left:970px;top:358px;width:1px;height:21px;background:#CBDFF8"></div>
<div class="t cl" style="left:840px;top:362px;color:#000">Khoan lỗ</div>
<div style="left:1041px;top:358px;width:1px;height:21px;background:#CBDFF8"></div>
<div class="t cl" style="left:974px;top:362px;color:#000">DH29012602</div>
<div style="left:1126px;top:358px;width:1px;height:21px;background:#CBDFF8"></div>
<div class="t cl" style="left:1045px;top:362px;color:#000">CNC</div>
<div style="left:1201px;top:358px;width:1px;height:21px;background:#CBDFF8"></div>
<div style="left:1304px;top:358px;width:1px;height:21px;background:#CBDFF8"></div>
<div style="left:8px;top:379px;width:15px;height:20px;background:#A3C1EA"></div>
<div style="left:9px;top:379px;width:13px;height:1px;background:#E0ECFB"></div>
<div style="left:8px;top:399px;width:15px;height:1px;background:#8DB0E4"></div>
<div style="left:23px;top:399px;width:1318px;height:1px;background:#CBDFF8"></div>
<div style="left:92px;top:379px;width:1px;height:21px;background:#CBDFF8"></div>
<div class="t nm" style="right:1272px;top:383px;color:#000">13</div>
<div style="left:170px;top:379px;width:1px;height:21px;background:#CBDFF8"></div>
<div class="t cl" style="left:96px;top:383px;color:#000">MAI-KSH-013</div>
<div style="left:296px;top:379px;width:1px;height:21px;background:#CBDFF8"></div>
<div class="t cl" style="left:174px;top:383px;color:#000">Mài KSH-830</div>
<div style="left:339px;top:379px;width:1px;height:21px;background:#CBDFF8"></div>
<div class="t cl" style="left:300px;top:383px;color:#000">MW</div>
<div style="left:451px;top:379px;width:1px;height:21px;background:#CBDFF8"></div>
<div class="t nm" style="left:343px;top:383px;color:#000">03/03/2026 10:15:00</div>
<div style="left:563px;top:379px;width:1px;height:21px;background:#CBDFF8"></div>
<div class="t nm" style="left:455px;top:383px;color:#000">04/03/2026 06:15:00</div>
<div style="left:613px;top:379px;width:1px;height:21px;background:#CBDFF8"></div>
<div class="t nm" style="right:751px;top:383px;color:#000">8.00</div>
<div style="left:663px;top:379px;width:1px;height:21px;background:#CBDFF8"></div>
<div class="t nm" style="right:701px;top:383px;color:#000">8.00</div>
<div style="left:713px;top:379px;width:1px;height:21px;background:#CBDFF8"></div>
<div class="t cl" style="left:667px;top:383px;color:#000">Thứ 3</div>
<div style="left:786px;top:379px;width:1px;height:21px;background:#CBDFF8"></div>
<div class="t cl" style="left:717px;top:383px;color:#000">Số ca: 1 (Kíp)</div>
<div style="left:836px;top:379px;width:1px;height:21px;background:#CBDFF8"></div>
<div class="t nm" style="right:528px;top:383px;color:#000">8</div>
<div style="left:970px;top:379px;width:1px;height:21px;background:#CBDFF8"></div>
<div class="t cl" style="left:840px;top:383px;color:#000">Mài phẳng</div>
<div style="left:1041px;top:379px;width:1px;height:21px;background:#CBDFF8"></div>
<div class="t cl" style="left:974px;top:383px;color:#000">DH29012602</div>
<div style="left:1126px;top:379px;width:1px;height:21px;background:#CBDFF8"></div>
<div class="t cl" style="left:1045px;top:383px;color:#000">Mài</div>
<div style="left:1201px;top:379px;width:1px;height:21px;background:#CBDFF8"></div>
<div style="left:1304px;top:379px;width:1px;height:21px;background:#CBDFF8"></div>
<div style="left:8px;top:400px;width:15px;height:20px;background:#A3C1EA"></div>
<div style="left:9px;top:400px;width:13px;height:1px;background:#E0ECFB"></div>
<div style="left:8px;top:420px;width:15px;height:1px;background:#8DB0E4"></div>
<div style="left:23px;top:420px;width:1318px;height:1px;background:#CBDFF8"></div>
<div style="left:92px;top:400px;width:1px;height:21px;background:#CBDFF8"></div>
<div class="t nm" style="right:1272px;top:404px;color:#000">14</div>
<div style="left:170px;top:400px;width:1px;height:21px;background:#CBDFF8"></div>
<div class="t cl" style="left:96px;top:404px;color:#000">LRA-CHO-001</div>
<div style="left:296px;top:400px;width:1px;height:21px;background:#CBDFF8"></div>
<div class="t cl" style="left:174px;top:404px;color:#000">Cắt hơi</div>
<div style="left:339px;top:400px;width:1px;height:21px;background:#CBDFF8"></div>
<div class="t cl" style="left:300px;top:404px;color:#000">MW</div>
<div style="left:451px;top:400px;width:1px;height:21px;background:#CBDFF8"></div>
<div class="t nm" style="left:343px;top:404px;color:#000">03/03/2026 13:45:00</div>
<div style="left:563px;top:400px;width:1px;height:21px;background:#CBDFF8"></div>
<div class="t nm" style="left:455px;top:404px;color:#000">04/03/2026 10:45:00</div>
<div style="left:613px;top:400px;width:1px;height:21px;background:#CBDFF8"></div>
<div class="t nm" style="right:751px;top:404px;color:#000">6.00</div>
<div style="left:663px;top:400px;width:1px;height:21px;background:#CBDFF8"></div>
<div class="t nm" style="right:701px;top:404px;color:#000">12.25</div>
<div style="left:713px;top:400px;width:1px;height:21px;background:#CBDFF8"></div>
<div class="t cl" style="left:667px;top:404px;color:#000">Thứ 3</div>
<div style="left:786px;top:400px;width:1px;height:21px;background:#CBDFF8"></div>
<div class="t cl" style="left:717px;top:404px;color:#000">HC</div>
<div style="left:836px;top:400px;width:1px;height:21px;background:#CBDFF8"></div>
<div class="t nm" style="right:528px;top:404px;color:#000">2</div>
<div style="left:970px;top:400px;width:1px;height:21px;background:#CBDFF8"></div>
<div class="t cl" style="left:840px;top:404px;color:#000">Cắt hơi</div>
<div style="left:1041px;top:400px;width:1px;height:21px;background:#CBDFF8"></div>
<div class="t cl" style="left:974px;top:404px;color:#000">DH29012605</div>
<div style="left:1126px;top:400px;width:1px;height:21px;background:#CBDFF8"></div>
<div class="t cl" style="left:1045px;top:404px;color:#000">Lắp ráp</div>
<div style="left:1201px;top:400px;width:1px;height:21px;background:#CBDFF8"></div>
<div class="t nm" style="left:1130px;top:404px;color:#000">064</div>
<div style="left:1304px;top:400px;width:1px;height:21px;background:#CBDFF8"></div>
<div class="t cl" style="left:1205px;top:404px;color:#000">Bùi Văn S</div>
<div style="left:8px;top:421px;width:15px;height:20px;background:#A3C1EA"></div>
<div style="left:9px;top:421px;width:13px;height:1px;background:#E0ECFB"></div>
<div style="left:8px;top:441px;width:15px;height:1px;background:#8DB0E4"></div>
<div style="left:23px;top:441px;width:1318px;height:1px;background:#CBDFF8"></div>
<div style="left:92px;top:421px;width:1px;height:21px;background:#CBDFF8"></div>
<div class="t nm" style="right:1272px;top:425px;color:#000">15</div>
<div style="left:170px;top:421px;width:1px;height:21px;background:#CBDFF8"></div>
<div class="t cl" style="left:96px;top:425px;color:#000">PTH-HAM-003</div>
<div style="left:296px;top:421px;width:1px;height:21px;background:#CBDFF8"></div>
<div class="t cl" style="left:174px;top:425px;color:#000">Hamai</div>
<div style="left:339px;top:421px;width:1px;height:21px;background:#CBDFF8"></div>
<div class="t cl" style="left:300px;top:425px;color:#000">MW</div>
<div style="left:451px;top:421px;width:1px;height:21px;background:#CBDFF8"></div>
<div class="t nm" style="left:343px;top:425px;color:#000">03/03/2026 13:45:00</div>
<div style="left:563px;top:421px;width:1px;height:21px;background:#CBDFF8"></div>
<div class="t nm" style="left:455px;top:425px;color:#000">03/03/2026 20:21:00</div>
<div style="left:613px;top:421px;width:1px;height:21px;background:#CBDFF8"></div>
<div class="t nm" style="right:751px;top:425px;color:#000">6.60</div>
<div style="left:663px;top:421px;width:1px;height:21px;background:#CBDFF8"></div>
<div class="t nm" style="right:701px;top:425px;color:#000">7.60</div>
<div style="left:713px;top:421px;width:1px;height:21px;background:#CBDFF8"></div>
<div class="t cl" style="left:667px;top:425px;color:#000">Thứ 3</div>
<div style="left:786px;top:421px;width:1px;height:21px;background:#CBDFF8"></div>
<div class="t cl" style="left:717px;top:425px;color:#000">Số ca: 2 (Ca)</div>
<div style="left:836px;top:421px;width:1px;height:21px;background:#CBDFF8"></div>
<div class="t nm" style="right:528px;top:425px;color:#000">3</div>
<div style="left:970px;top:421px;width:1px;height:21px;background:#CBDFF8"></div>
<div class="t cl" style="left:840px;top:425px;color:#000">Phay cạnh</div>
<div style="left:1041px;top:421px;width:1px;height:21px;background:#CBDFF8"></div>
<div class="t cl" style="left:974px;top:425px;color:#000">DH29012604</div>
<div style="left:1126px;top:421px;width:1px;height:21px;background:#CBDFF8"></div>
<div class="t cl" style="left:1045px;top:425px;color:#000">Phay thô</div>
<div style="left:1201px;top:421px;width:1px;height:21px;background:#CBDFF8"></div>
<div style="left:1304px;top:421px;width:1px;height:21px;background:#CBDFF8"></div>
<div class="t nm" style="left:1308px;top:425px;color:#000">195</div>
<div style="left:8px;top:442px;width:15px;height:20px;background:#A3C1EA"></div>
<div style="left:9px;top:442px;width:13px;height:1px;background:#E0ECFB"></div>
<div style="left:8px;top:462px;width:15px;height:1px;background:#8DB0E4"></div>
<div style="left:23px;top:462px;width:1318px;height:1px;background:#CBDFF8"></div>
<div style="left:92px;top:442px;width:1px;height:21px;background:#CBDFF8"></div>
<div class="t nm" style="right:1272px;top:446px;color:#000">16</div>
<div style="left:170px;top:442px;width:1px;height:21px;background:#CBDFF8"></div>
<div class="t cl" style="left:96px;top:446px;color:#000">CNC-VM3-009</div>
<div style="left:296px;top:442px;width:1px;height:21px;background:#CBDFF8"></div>
<div class="t cl" style="left:174px;top:446px;color:#000">VM3</div>
<div style="left:339px;top:442px;width:1px;height:21px;background:#CBDFF8"></div>
<div class="t cl" style="left:300px;top:446px;color:#000">MW</div>
<div style="left:451px;top:442px;width:1px;height:21px;background:#CBDFF8"></div>
<div class="t nm" style="left:343px;top:446px;color:#000">04/03/2026 06:15:00</div>
<div style="left:563px;top:442px;width:1px;height:21px;background:#CBDFF8"></div>
<div class="t nm" style="left:455px;top:446px;color:#000">04/03/2026 10:15:00</div>
<div style="left:613px;top:442px;width:1px;height:21px;background:#CBDFF8"></div>
<div class="t nm" style="right:751px;top:446px;color:#000">4.00</div>
<div style="left:663px;top:442px;width:1px;height:21px;background:#CBDFF8"></div>
<div class="t nm" style="right:701px;top:446px;color:#000">4.00</div>
<div style="left:713px;top:442px;width:1px;height:21px;background:#CBDFF8"></div>
<div class="t cl" style="left:667px;top:446px;color:#000">Thứ 4</div>
<div style="left:786px;top:442px;width:1px;height:21px;background:#CBDFF8"></div>
<div class="t cl" style="left:717px;top:446px;color:#000">Số ca: 1 (Kíp)</div>
<div style="left:836px;top:442px;width:1px;height:21px;background:#CBDFF8"></div>
<div class="t nm" style="right:528px;top:446px;color:#000">9</div>
<div style="left:970px;top:442px;width:1px;height:21px;background:#CBDFF8"></div>
<div class="t cl" style="left:840px;top:446px;color:#000">Phay tinh</div>
<div style="left:1041px;top:442px;width:1px;height:21px;background:#CBDFF8"></div>
<div class="t cl" style="left:974px;top:446px;color:#000">DH29012602</div>
<div style="left:1126px;top:442px;width:1px;height:21px;background:#CBDFF8"></div>
<div class="t cl" style="left:1045px;top:446px;color:#000">CNC</div>
<div style="left:1201px;top:442px;width:1px;height:21px;background:#CBDFF8"></div>
<div class="t nm" style="left:1130px;top:446px;color:#000">226</div>
<div style="left:1304px;top:442px;width:1px;height:21px;background:#CBDFF8"></div>
<div class="t cl" style="left:1205px;top:446px;color:#000">Nguyễn Anh R</div>
<div style="left:8px;top:463px;width:15px;height:20px;background:#A3C1EA"></div>
<div style="left:9px;top:463px;width:13px;height:1px;background:#E0ECFB"></div>
<div style="left:8px;top:483px;width:15px;height:1px;background:#8DB0E4"></div>
<div style="left:23px;top:483px;width:1318px;height:1px;background:#CBDFF8"></div>
<div style="left:92px;top:463px;width:1px;height:21px;background:#CBDFF8"></div>
<div class="t nm" style="right:1272px;top:467px;color:#000">17</div>
<div style="left:170px;top:463px;width:1px;height:21px;background:#CBDFF8"></div>
<div class="t cl" style="left:96px;top:467px;color:#000">KHA-THK-046</div>
<div style="left:296px;top:463px;width:1px;height:21px;background:#CBDFF8"></div>
<div class="t cl" style="left:174px;top:467px;color:#000">Thiết kế tinh</div>
<div style="left:339px;top:463px;width:1px;height:21px;background:#CBDFF8"></div>
<div class="t cl" style="left:300px;top:467px;color:#000">MW</div>
<div style="left:451px;top:463px;width:1px;height:21px;background:#CBDFF8"></div>
<div class="t nm" style="left:343px;top:467px;color:#000">04/03/2026 07:15:00</div>
<div style="left:563px;top:463px;width:1px;height:21px;background:#CBDFF8"></div>
<div class="t nm" style="left:455px;top:467px;color:#000">04/03/2026 12:15:00</div>
<div style="left:613px;top:463px;width:1px;height:21px;background:#CBDFF8"></div>
<div class="t nm" style="right:751px;top:467px;color:#000">5.00</div>
<div style="left:663px;top:463px;width:1px;height:21px;background:#CBDFF8"></div>
<div class="t nm" style="right:701px;top:467px;color:#000">40.00</div>
<div style="left:713px;top:463px;width:1px;height:21px;background:#CBDFF8"></div>
<div class="t cl" style="left:667px;top:467px;color:#000">Thứ 4</div>
<div style="left:786px;top:463px;width:1px;height:21px;background:#CBDFF8"></div>
<div class="t cl" style="left:717px;top:467px;color:#000">HC</div>
<div style="left:836px;top:463px;width:1px;height:21px;background:#CBDFF8"></div>
<div class="t nm" style="right:528px;top:467px;color:#000">4</div>
<div style="left:970px;top:463px;width:1px;height:21px;background:#CBDFF8"></div>
<div class="t cl" style="left:840px;top:467px;color:#000">Thiết kế tinh (KT)</div>
<div style="left:1041px;top:463px;width:1px;height:21px;background:#CBDFF8"></div>
<div class="t cl" style="left:974px;top:467px;color:#000">DH29012606</div>
<div style="left:1126px;top:463px;width:1px;height:21px;background:#CBDFF8"></div>
<div class="t cl" style="left:1045px;top:467px;color:#000">Phòng Kỹ Thuật</div>
<div style="left:1201px;top:463px;width:1px;height:21px;background:#CBDFF8"></div>
<div class="t nm" style="left:1130px;top:467px;color:#000">253</div>
<div style="left:1304px;top:463px;width:1px;height:21px;background:#CBDFF8"></div>
<div class="t cl" style="left:1205px;top:467px;color:#000">Vũ Đức Anh A</div>
<div style="left:8px;top:484px;width:15px;height:20px;background:#A3C1EA"></div>
<div style="left:9px;top:484px;width:13px;height:1px;background:#E0ECFB"></div>
<div style="left:8px;top:504px;width:15px;height:1px;background:#8DB0E4"></div>
<div style="left:23px;top:504px;width:1318px;height:1px;background:#CBDFF8"></div>
<div style="left:92px;top:484px;width:1px;height:21px;background:#CBDFF8"></div>
<div class="t nm" style="right:1272px;top:488px;color:#000">18</div>
<div style="left:170px;top:484px;width:1px;height:21px;background:#CBDFF8"></div>
<div class="t cl" style="left:96px;top:488px;color:#000">PTH-MAR-004</div>
<div style="left:296px;top:484px;width:1px;height:21px;background:#CBDFF8"></div>
<div class="t cl" style="left:174px;top:488px;color:#000">Marufuku</div>
<div style="left:339px;top:484px;width:1px;height:21px;background:#CBDFF8"></div>
<div class="t cl" style="left:300px;top:488px;color:#000">MW</div>
<div style="left:451px;top:484px;width:1px;height:21px;background:#CBDFF8"></div>
<div class="t nm" style="left:343px;top:488px;color:#000">04/03/2026 07:30:00</div>
<div style="left:563px;top:484px;width:1px;height:21px;background:#CBDFF8"></div>
<div class="t nm" style="left:455px;top:488px;color:#000">04/03/2026 12:30:00</div>
<div style="left:613px;top:484px;width:1px;height:21px;background:#CBDFF8"></div>
<div class="t nm" style="right:751px;top:488px;color:#000">5.00</div>
<div style="left:663px;top:484px;width:1px;height:21px;background:#CBDFF8"></div>
<div class="t nm" style="right:701px;top:488px;color:#000">6.00</div>
<div style="left:713px;top:484px;width:1px;height:21px;background:#CBDFF8"></div>
<div class="t cl" style="left:667px;top:488px;color:#000">Thứ 4</div>
<div style="left:786px;top:484px;width:1px;height:21px;background:#CBDFF8"></div>
<div class="t cl" style="left:717px;top:488px;color:#000">HC</div>
<div style="left:836px;top:484px;width:1px;height:21px;background:#CBDFF8"></div>
<div class="t nm" style="right:528px;top:488px;color:#000">4</div>
<div style="left:970px;top:484px;width:1px;height:21px;background:#CBDFF8"></div>
<div class="t cl" style="left:840px;top:488px;color:#000">Phay phẳng</div>
<div style="left:1041px;top:484px;width:1px;height:21px;background:#CBDFF8"></div>
<div class="t cl" style="left:974px;top:488px;color:#000">DH29012604</div>
<div style="left:1126px;top:484px;width:1px;height:21px;background:#CBDFF8"></div>
<div class="t cl" style="left:1045px;top:488px;color:#000">Phay thô</div>
<div style="left:1201px;top:484px;width:1px;height:21px;background:#CBDFF8"></div>
<div class="t nm" style="left:1130px;top:488px;color:#000">153</div>
<div style="left:1304px;top:484px;width:1px;height:21px;background:#CBDFF8"></div>
<div class="t cl" style="left:1205px;top:488px;color:#000">Lỗ Văn Q</div>
<div style="left:8px;top:505px;width:15px;height:20px;background:#A3C1EA"></div>
<div style="left:9px;top:505px;width:13px;height:1px;background:#E0ECFB"></div>
<div style="left:8px;top:525px;width:15px;height:1px;background:#8DB0E4"></div>
<div style="left:23px;top:525px;width:1318px;height:1px;background:#CBDFF8"></div>
<div style="left:92px;top:505px;width:1px;height:21px;background:#CBDFF8"></div>
<div class="t nm" style="right:1272px;top:509px;color:#000">19</div>
<div style="left:170px;top:505px;width:1px;height:21px;background:#CBDFF8"></div>
<div class="t cl" style="left:96px;top:509px;color:#000">KHA-THK-046</div>
<div style="left:296px;top:505px;width:1px;height:21px;background:#CBDFF8"></div>
<div class="t cl" style="left:174px;top:509px;color:#000">Thiết kế tinh</div>
<div style="left:339px;top:505px;width:1px;height:21px;background:#CBDFF8"></div>
<div class="t cl" style="left:300px;top:509px;color:#000">MW</div>
<div style="left:451px;top:505px;width:1px;height:21px;background:#CBDFF8"></div>
<div class="t nm" style="left:343px;top:509px;color:#000">04/03/2026 07:30:00</div>
<div style="left:563px;top:505px;width:1px;height:21px;background:#CBDFF8"></div>
<div class="t nm" style="left:455px;top:509px;color:#000">04/03/2026 12:30:00</div>
<div style="left:613px;top:505px;width:1px;height:21px;background:#CBDFF8"></div>
<div class="t nm" style="right:751px;top:509px;color:#000">5.00</div>
<div style="left:663px;top:505px;width:1px;height:21px;background:#CBDFF8"></div>
<div class="t nm" style="right:701px;top:509px;color:#000">20.00</div>
<div style="left:713px;top:505px;width:1px;height:21px;background:#CBDFF8"></div>
<div class="t cl" style="left:667px;top:509px;color:#000">Thứ 4</div>
<div style="left:786px;top:505px;width:1px;height:21px;background:#CBDFF8"></div>
<div class="t cl" style="left:717px;top:509px;color:#000">HC</div>
<div style="left:836px;top:505px;width:1px;height:21px;background:#CBDFF8"></div>
<div class="t nm" style="right:528px;top:509px;color:#000">5</div>
<div style="left:970px;top:505px;width:1px;height:21px;background:#CBDFF8"></div>
<div class="t cl" style="left:840px;top:509px;color:#000">Thiết kế tinh (KT)</div>
<div style="left:1041px;top:505px;width:1px;height:21px;background:#CBDFF8"></div>
<div class="t cl" style="left:974px;top:509px;color:#000">DH29012604</div>
<div style="left:1126px;top:505px;width:1px;height:21px;background:#CBDFF8"></div>
<div class="t cl" style="left:1045px;top:509px;color:#000">Phòng Kỹ Thuật</div>
<div style="left:1201px;top:505px;width:1px;height:21px;background:#CBDFF8"></div>
<div class="t nm" style="left:1130px;top:509px;color:#000">253</div>
<div style="left:1304px;top:505px;width:1px;height:21px;background:#CBDFF8"></div>
<div class="t cl" style="left:1205px;top:509px;color:#000">Vũ Đức Anh A</div>
<div style="left:8px;top:526px;width:15px;height:20px;background:#A3C1EA"></div>
<div style="left:9px;top:526px;width:13px;height:1px;background:#E0ECFB"></div>
<div style="left:8px;top:546px;width:15px;height:1px;background:#8DB0E4"></div>
<div style="left:23px;top:546px;width:1318px;height:1px;background:#CBDFF8"></div>
<div style="left:92px;top:526px;width:1px;height:21px;background:#CBDFF8"></div>
<div class="t nm" style="right:1272px;top:530px;color:#000">20</div>
<div style="left:170px;top:526px;width:1px;height:21px;background:#CBDFF8"></div>
<div class="t cl" style="left:96px;top:530px;color:#000">EPK-EP2-022</div>
<div style="left:296px;top:526px;width:1px;height:21px;background:#CBDFF8"></div>
<div class="t cl" style="left:174px;top:530px;color:#000">Ép keo 2</div>
<div style="left:339px;top:526px;width:1px;height:21px;background:#CBDFF8"></div>
<div class="t cl" style="left:300px;top:530px;color:#000">MW</div>
<div style="left:451px;top:526px;width:1px;height:21px;background:#CBDFF8"></div>
<div class="t nm" style="left:343px;top:530px;color:#000">04/03/2026 10:15:00</div>
<div style="left:563px;top:526px;width:1px;height:21px;background:#CBDFF8"></div>
<div class="t nm" style="left:455px;top:530px;color:#000">04/03/2026 12:15:00</div>
<div style="left:613px;top:526px;width:1px;height:21px;background:#CBDFF8"></div>
<div class="t nm" style="right:751px;top:530px;color:#000">2.00</div>
<div style="left:663px;top:526px;width:1px;height:21px;background:#CBDFF8"></div>
<div class="t nm" style="right:701px;top:530px;color:#000">2.00</div>
<div style="left:713px;top:526px;width:1px;height:21px;background:#CBDFF8"></div>
<div class="t cl" style="left:667px;top:530px;color:#000">Thứ 4</div>
<div style="left:786px;top:526px;width:1px;height:21px;background:#CBDFF8"></div>
<div class="t cl" style="left:717px;top:530px;color:#000">HC</div>
<div style="left:836px;top:526px;width:1px;height:21px;background:#CBDFF8"></div>
<div class="t nm" style="right:528px;top:530px;color:#000">10</div>
<div style="left:970px;top:526px;width:1px;height:21px;background:#CBDFF8"></div>
<div class="t cl" style="left:840px;top:530px;color:#000">Đánh bóng chày</div>
<div style="left:1041px;top:526px;width:1px;height:21px;background:#CBDFF8"></div>
<div class="t cl" style="left:974px;top:530px;color:#000">DH29012602</div>
<div style="left:1126px;top:526px;width:1px;height:21px;background:#CBDFF8"></div>
<div class="t cl" style="left:1045px;top:530px;color:#000">Ép keo</div>
<div style="left:1201px;top:526px;width:1px;height:21px;background:#CBDFF8"></div>
<div class="t nm" style="left:1130px;top:530px;color:#000">210</div>
<div style="left:1304px;top:526px;width:1px;height:21px;background:#CBDFF8"></div>
<div class="t cl" style="left:1205px;top:530px;color:#000">Nguyễn Văn C</div>
<div style="left:22px;top:126px;width:1px;height:426px;background:#8DB0E4"></div>
<svg style="position:absolute;left:14px;top:133px" width="5" height="8"><path d="M0 0l4 3.5-4 3.5z" fill="#0A1A70"/></svg>
<div style="left:8px;top:547px;width:15px;height:5px;background:#A3C1EA"></div>
<div style="left:9px;top:547px;width:13px;height:1px;background:#E0ECFB"></div>
<div style="left:92px;top:547px;width:1px;height:5px;background:#CBDFF8"></div>
<div style="left:170px;top:547px;width:1px;height:5px;background:#CBDFF8"></div>
<div style="left:296px;top:547px;width:1px;height:5px;background:#CBDFF8"></div>
<div style="left:339px;top:547px;width:1px;height:5px;background:#CBDFF8"></div>
<div style="left:451px;top:547px;width:1px;height:5px;background:#CBDFF8"></div>
<div style="left:563px;top:547px;width:1px;height:5px;background:#CBDFF8"></div>
<div style="left:613px;top:547px;width:1px;height:5px;background:#CBDFF8"></div>
<div style="left:663px;top:547px;width:1px;height:5px;background:#CBDFF8"></div>
<div style="left:713px;top:547px;width:1px;height:5px;background:#CBDFF8"></div>
<div style="left:786px;top:547px;width:1px;height:5px;background:#CBDFF8"></div>
<div style="left:836px;top:547px;width:1px;height:5px;background:#CBDFF8"></div>
<div style="left:970px;top:547px;width:1px;height:5px;background:#CBDFF8"></div>
<div style="left:1041px;top:547px;width:1px;height:5px;background:#CBDFF8"></div>
<div style="left:1126px;top:547px;width:1px;height:5px;background:#CBDFF8"></div>
<div style="left:1201px;top:547px;width:1px;height:5px;background:#CBDFF8"></div>
<div style="left:1304px;top:547px;width:1px;height:5px;background:#CBDFF8"></div>
<div style="left:8px;top:552px;width:1350px;height:26px;border-top:1px solid #8DB0E4;border-bottom:1px solid #8DB0E4;background:linear-gradient(#A0C0EA,#BCD4F3)"></div>
<div style="left:8px;top:553px;width:1350px;height:1px;background:#F0F6FE"></div>
<div style="left:565px;top:555px;width:49px;height:21px;border:1px solid #BCD3F2;border-right-color:#8DB0E3;border-bottom-color:#8DB0E3;background:#D8E6F8"></div>
<div class="t" style="left:570px;top:558px;font-weight:bold;color:#1A2A8A;letter-spacing:0.3px">1,037...</div>
<div style="left:8px;top:578px;width:1350px;height:18px;background:linear-gradient(#DCEEFC,#FFFFFF)"></div>
<div style="left:8px;top:578px;width:17px;height:17px;border-radius:3px;background:linear-gradient(160deg,#CDEEFE 0%,#8DBAEF 30%,#6896DE 72%,#4B76C6 100%);box-shadow:inset 0 -1px 0 #3558AA,inset 1px 0 0 rgba(70,110,190,.5),inset -1px 0 0 rgba(50,80,170,.6),inset 0 1px 0 rgba(90,130,200,.5)"></div>
<svg style="position:absolute;left:8px;top:578px" width="17" height="17"><path d="M10.5 4.5l-4 4 4 4" fill="none" stroke="#fff" stroke-width="2.2" stroke-linecap="butt"/></svg>
<div style="left:26px;top:578px;width:559px;height:17px;border-radius:3px;background:linear-gradient(#CDEBFD 0%,#8FBDEF 25%,#6F9FE3 70%,#5380CC 100%);box-shadow:inset 0 -1px 0 #2D46A0,inset 1px 0 0 rgba(70,110,190,.5),inset -1px 0 0 rgba(50,80,170,.6),inset 0 1px 0 rgba(90,130,200,.6)"></div>
<svg style="position:absolute;left:302px;top:584px" width="7" height="6"><path d="M0.5 0v6M2.5 0v6M4.5 0v6" stroke="#E6F4FF" stroke-width="1"/><path d="M1.5 0v6M3.5 0v6M5.5 0v6" stroke="#3250A8" stroke-width="1"/></svg>
<div style="left:1341px;top:578px;width:17px;height:17px;border-radius:3px;background:linear-gradient(160deg,#CDEEFE 0%,#8DBAEF 30%,#6896DE 72%,#4B76C6 100%);box-shadow:inset 0 -1px 0 #3558AA,inset 1px 0 0 rgba(70,110,190,.5),inset -1px 0 0 rgba(50,80,170,.6),inset 0 1px 0 rgba(90,130,200,.5)"></div>
<svg style="position:absolute;left:1341px;top:578px" width="17" height="17"><path d="M6.5 4.5l4 4-4 4" fill="none" stroke="#fff" stroke-width="2.2" stroke-linecap="butt"/></svg>
<div style="left:1341px;top:102px;width:17px;height:450px;background:linear-gradient(90deg,#DCEAFB,#F8FBFF)"></div>
<div style="left:1341px;top:102px;width:17px;height:17px;border-radius:3px;background:linear-gradient(160deg,#CDEEFE 0%,#8DBAEF 30%,#6896DE 72%,#4B76C6 100%);box-shadow:inset 0 -1px 0 #3558AA,inset 1px 0 0 rgba(70,110,190,.5),inset -1px 0 0 rgba(50,80,170,.6),inset 0 1px 0 rgba(90,130,200,.5)"></div>
<svg style="position:absolute;left:1341px;top:102px" width="17" height="17"><path d="M4.5 11l4-4 4 4" fill="none" stroke="#fff" stroke-width="2.2" stroke-linecap="butt"/></svg>
<div style="left:1341px;top:120px;width:17px;height:78px;border-radius:3px;background:linear-gradient(90deg,#C9E8FD 0%,#8FBDEF 25%,#6F9FE3 70%,#5380CC 100%);box-shadow:inset -1px 0 0 #2D46A0,inset 0 1px 0 rgba(70,110,190,.5),inset 0 -1px 0 rgba(50,80,170,.6),inset 1px 0 0 rgba(90,130,200,.6)"></div>
<svg style="position:absolute;left:1346px;top:156px" width="7" height="6"><path d="M0 0.5h7M0 2.5h7M0 4.5h7" stroke="#E6F4FF" stroke-width="1"/><path d="M0 1.5h7M0 3.5h7M0 5.5h7" stroke="#3250A8" stroke-width="1"/></svg>
<div style="left:1341px;top:535px;width:17px;height:17px;border-radius:3px;background:linear-gradient(160deg,#CDEEFE 0%,#8DBAEF 30%,#6896DE 72%,#4B76C6 100%);box-shadow:inset 0 -1px 0 #3558AA,inset 1px 0 0 rgba(70,110,190,.5),inset -1px 0 0 rgba(50,80,170,.6),inset 0 1px 0 rgba(90,130,200,.5)"></div>
<svg style="position:absolute;left:1341px;top:535px" width="17" height="17"><path d="M4.5 6l4 4 4-4" fill="none" stroke="#fff" stroke-width="2.2" stroke-linecap="butt"/></svg>
<div class="t" style="left:1010px;top:602px;letter-spacing:-0.18px;color:#101030">[Resource Planning] Row 1/101</div>
<div style="left:1164px;top:601px;width:197px;height:20px;background:#FCFDFF"></div>
<div class="t" style="left:1242px;top:606px;color:#101030">Page 1/0</div>
<div style="left:1165px;top:602px;width:23px;height:22px;border-radius:3px;background:linear-gradient(160deg,#CDEEFE 0%,#8DBAEF 30%,#6896DE 72%,#4B76C6 100%);box-shadow:inset 0 -1px 0 #3558AA,inset 1px 0 0 rgba(70,110,190,.5),inset -1px 0 0 rgba(50,80,170,.6),inset 0 1px 0 rgba(90,130,200,.5)"></div>
<svg style="position:absolute;left:1171px;top:608px" width="10" height="7"><path d="M0 0h2v7h-2z M2 3.5l4-3.5v7z M6 3.5l4-3.5v7z" fill="#fff"/></svg>
<div style="left:1190px;top:602px;width:23px;height:22px;border-radius:3px;background:linear-gradient(160deg,#CDEEFE 0%,#8DBAEF 30%,#6896DE 72%,#4B76C6 100%);box-shadow:inset 0 -1px 0 #3558AA,inset 1px 0 0 rgba(70,110,190,.5),inset -1px 0 0 rgba(50,80,170,.6),inset 0 1px 0 rgba(90,130,200,.5)"></div>
<svg style="position:absolute;left:1197px;top:608px" width="8" height="7"><path d="M0 3.5l4-3.5v7z M4 3.5l4-3.5v7z" fill="#fff"/></svg>
<div style="left:1215px;top:602px;width:22px;height:22px;border-radius:3px;background:linear-gradient(160deg,#CDEEFE 0%,#8DBAEF 30%,#6896DE 72%,#4B76C6 100%);box-shadow:inset 0 -1px 0 #3558AA,inset 1px 0 0 rgba(70,110,190,.5),inset -1px 0 0 rgba(50,80,170,.6),inset 0 1px 0 rgba(90,130,200,.5)"></div>
<svg style="position:absolute;left:1224px;top:608px" width="4" height="7"><path d="M0 3.5l4-3.5v7z" fill="#fff"/></svg>
<div style="left:1293px;top:602px;width:22px;height:22px;border-radius:3px;background:linear-gradient(160deg,#CDEEFE 0%,#8DBAEF 30%,#6896DE 72%,#4B76C6 100%);box-shadow:inset 0 -1px 0 #3558AA,inset 1px 0 0 rgba(70,110,190,.5),inset -1px 0 0 rgba(50,80,170,.6),inset 0 1px 0 rgba(90,130,200,.5)"></div>
<svg style="position:absolute;left:1302px;top:608px" width="4" height="7"><path d="M0 0l4 3.5-4 3.5z" fill="#fff"/></svg>
<div style="left:1317px;top:602px;width:22px;height:22px;border-radius:3px;background:linear-gradient(160deg,#CDEEFE 0%,#8DBAEF 30%,#6896DE 72%,#4B76C6 100%);box-shadow:inset 0 -1px 0 #3558AA,inset 1px 0 0 rgba(70,110,190,.5),inset -1px 0 0 rgba(50,80,170,.6),inset 0 1px 0 rgba(90,130,200,.5)"></div>
<svg style="position:absolute;left:1324px;top:608px" width="8" height="7"><path d="M0 0l4 3.5-4 3.5z M4 0l4 3.5-4 3.5z" fill="#fff"/></svg>
<div style="left:1341px;top:602px;width:23px;height:22px;border-radius:3px;background:linear-gradient(160deg,#CDEEFE 0%,#8DBAEF 30%,#6896DE 72%,#4B76C6 100%);box-shadow:inset 0 -1px 0 #3558AA,inset 1px 0 0 rgba(70,110,190,.5),inset -1px 0 0 rgba(50,80,170,.6),inset 0 1px 0 rgba(90,130,200,.5)"></div>
<svg style="position:absolute;left:1347px;top:608px" width="10" height="7"><path d="M0 0l4 3.5-4 3.5z M4 0l4 3.5-4 3.5z M8 0h2v7h-2z" fill="#fff"/></svg>
<div style="left:1358px;top:57px;width:1px;height:45px;background:#fff"></div>
<div style="left:1359px;top:55px;width:1px;height:542px;background:#8DB0E4"></div>
<div style="left:1360px;top:52px;width:1px;height:548px;background:#E1EFFD"></div>
<div style="left:334px;top:52px;width:232px;height:496px;border:2px solid #FF0000;filter:drop-shadow(2px 2px 3px rgba(0,0,0,.6))"></div>
<div style="left:964px;top:57px;width:79px;height:497px;border:2px solid #FF0000;filter:drop-shadow(2px 2px 3px rgba(0,0,0,.6))"></div>
</body></html>
